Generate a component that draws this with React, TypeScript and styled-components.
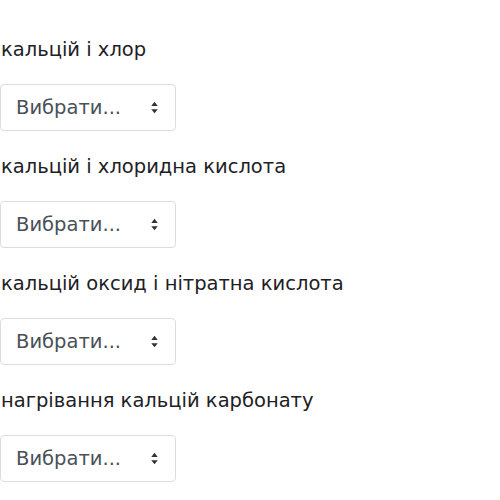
import styled, { createGlobalStyle } from "styled-components"

const GlobalStyle = createGlobalStyle`
  body {
    margin: 0;
    background: #fff;
    font-family: "DejaVu Sans", "Noto Sans", sans-serif;
    color: #1d2125;
  }
`

const questions = [
  "кальцій і хлор",
  "кальцій і хлоридна кислота",
  "кальцій оксид і нітратна кислота",
  "нагрівання кальцій карбонату",
]

export default function App(): JSX.Element {
  return (
    <>
      <GlobalStyle />
      <List>
        {questions.map((q) => (
          <Item key={q}>
            <Label>{q}</Label>
            <Select>
              <SelectText>Вибрати...</SelectText>
              <Caret viewBox="0 0 10 16" aria-hidden>
                <path d="M5 1 L9 6 H1 Z M5 15 L9 10 H1 Z" fill="#333" />
              </Caret>
            </Select>
          </Item>
        ))}
      </List>
    </>
  )
}

const List = styled.div`
  display: flex;
  flex-direction: column;
  gap: 24px;
  padding: 38px 0 0 1px;
`

const Item = styled.div`
  display: flex;
  flex-direction: column;
  gap: 22px;
`

const Label = styled.p`
  margin: 0;
  font-size: 19.5px;
  line-height: 24px;
`

const Select = styled.div`
  box-sizing: border-box;
  width: 176px;
  height: 47px;
  margin-left: -1px;
  border: 1px solid #dcdcdc;
  border-radius: 4px;
  display: flex;
  align-items: center;
  justify-content: space-between;
  padding: 0 16px 0 15px;
`

const SelectText = styled.span`
  font-size: 19.5px;
  color: #495057;
`

const Caret = styled.svg`
  width: 9px;
  height: 13px;
`
